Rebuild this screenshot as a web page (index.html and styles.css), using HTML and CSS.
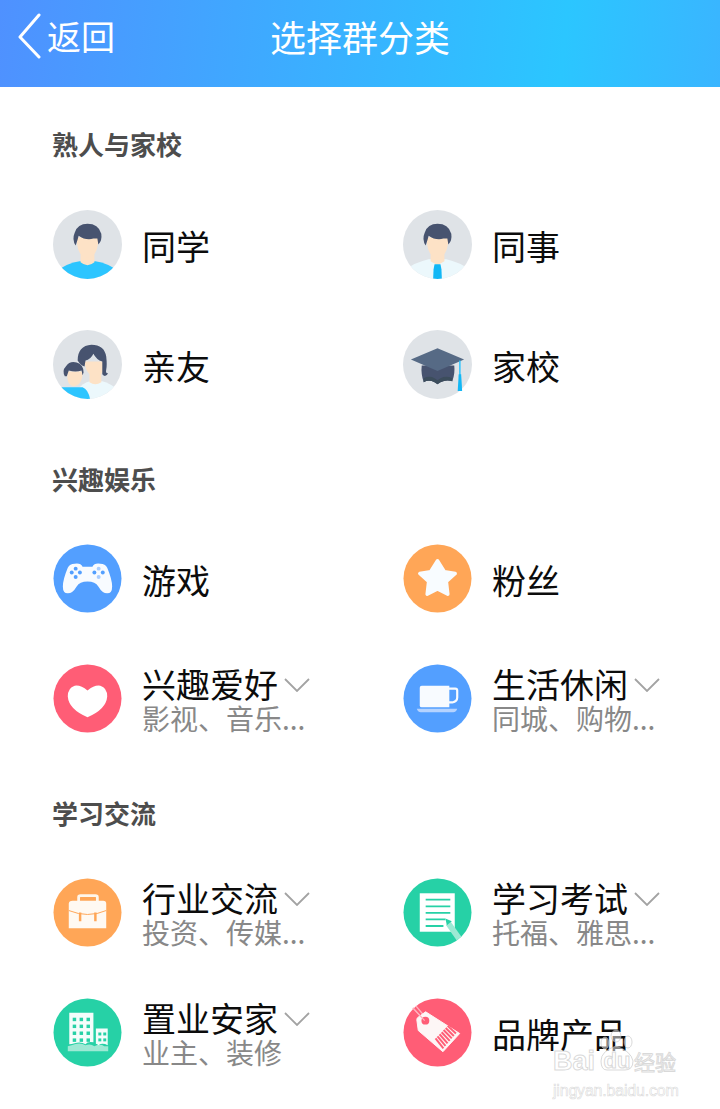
FILE: index.html
```html
<!DOCTYPE html>
<html lang="zh-CN">
<head>
<meta charset="utf-8">
<title>选择群分类</title>
<link rel="stylesheet" href="styles.css">
</head>
<body>
<div class="page">
  <header class="topbar">
    <div class="back">
      <svg class="back-arrow" width="28" height="46" viewBox="0 0 28 46"><path d="M24 2 L5 24 L24 44" fill="none" stroke="#fff" stroke-width="3" stroke-linecap="round" stroke-linejoin="round"/></svg>
      <span>返回</span>
    </div>
    <h1 class="title">选择群分类</h1>
  </header>
  <main class="content">
    <section class="group">
      <h2 class="group-title">熟人与家校</h2>
      <div class="grid">
        <div class="item">
          <svg class="icon" viewBox="0 0 70 70"><defs><clipPath id="c1"><circle cx="35" cy="35" r="35"/></clipPath></defs><circle cx="35" cy="35" r="35" fill="#dfe3e7"/><g clip-path="url(#c1)"><path d="M4 62 Q14 54 27 52 L43 52 Q56 54 66 62 L66 72 L4 72Z" fill="#2cc5ff"/><path d="M28 42 L42 42 L42 53 Q35 59 28 53Z" fill="#fde2c6"/><path d="M24 28 Q24 48 35 48 Q46 48 46 28Z" fill="#fde2c6"/><path d="M23 36 Q19 30 22 23 Q25 14 35 14 Q46 14 49 24 Q50 31 46 35 L45 29 L41 29 Q33 31 26 26 L25 30Z" fill="#47536f"/></g></svg>
          <div class="label"><div class="name">同学</div></div>
        </div>
        <div class="item">
          <svg class="icon" viewBox="0 0 70 70"><defs><clipPath id="c2"><circle cx="35" cy="35" r="35"/></clipPath></defs><circle cx="35" cy="35" r="35" fill="#dfe3e7"/><g clip-path="url(#c2)"><path d="M4 60 Q10 54 26 50 L44 50 Q60 54 66 60 L66 72 L4 72Z" fill="#ecf8fc"/><path d="M28 42 L42 42 L42 52 L35 56 L28 52Z" fill="#fde2c6"/><path d="M24 28 Q24 48 35 48 Q46 48 46 28Z" fill="#fde2c6"/><path d="M23 36 Q19 30 22 23 Q25 14 35 14 Q46 14 49 24 Q50 31 46 35 L45 29 L41 29 Q33 31 26 26 L25 30Z" fill="#47536f"/><path d="M32 55 L38 55 L39 60 L39.500 72 L30.500 72 L31 60Z" fill="#12b7f5"/></g></svg>
          <div class="label"><div class="name">同事</div></div>
        </div>
        <div class="item">
          <svg class="icon" viewBox="0 0 70 70"><defs><clipPath id="c3"><circle cx="35" cy="35" r="35"/></clipPath></defs><circle cx="35" cy="35" r="35" fill="#dfe3e7"/><g clip-path="url(#c3)"><path d="M24 62 Q30 53 38 52 L50 52 Q58 54 68 62 L68 72 L24 72Z" fill="#ecf8fc"/><path d="M37 42 L49 42 L49 53 Q43 57 37 53Z" fill="#fde2c6"/><path d="M32 32 Q33 46 43 47 Q53 46 53 32Z" fill="#fde2c6"/><path d="M25 31 Q25 16 39 15 Q52 15 54 27 Q55 36 54 40 Q53 44 56 44 Q53 49 50 45 Q50 38 50 32 Q44 30 41 24 Q38 30 33 31 L32 37 Q28 36 25 31Z" fill="#47536f"/><path d="M6 58 L30 58 Q36 60 38 72 L2 72Z" fill="#2cc5ff"/><path d="M15 42 Q13 56 21 57 Q30 56 30 42Z" fill="#fde2c6"/><path d="M12 47 Q9 41 13 37 Q17 31 24 33 Q31 35 31 43 L30 46 L29 41 Q23 43 16 41 L14 47Z" fill="#47536f"/></g></svg>
          <div class="label"><div class="name">亲友</div></div>
        </div>
        <div class="item">
          <svg class="icon" viewBox="0 0 70 70"><circle cx="35" cy="35" r="35" fill="#dfe3e7"/><path d="M19 36 L52 36 Q53 44 50 52 Q44 50 38 53 L35 55 L32 53 Q26 50 21 53 Q18 44 19 36Z" fill="#47536f"/><path d="M21 49 Q27 46 32 49 L35 51 L38 49 Q44 46 50 49 L50 52 Q44 50 38 53 L35 55 L32 53 Q26 50 21 53Z" fill="#3c4d5c"/><path d="M35 18.500 L62 30 L35 41.500 L8 30Z" fill="#566a85"/><path d="M57.700 31 L57.700 46" stroke="#2cc5ff" stroke-width="1.500"/><path d="M56.500 45 L59 45 L60 62 L55.500 62Z" fill="#12b7f5"/></svg>
          <div class="label"><div class="name">家校</div></div>
        </div>
      </div>
    </section>
    <section class="group">
      <h2 class="group-title">兴趣娱乐</h2>
      <div class="grid">
        <div class="item">
          <svg class="icon" viewBox="0 0 70 70"><circle cx="35" cy="35" r="34.500" fill="#539fff"/><path d="M22 20 Q17 20 15 24 Q10 36 10 43 Q10 50 15 50 Q20 50 24 43 Q27 38 35 38 Q43 38 46 43 Q50 50 55 50 Q60 50 60 43 Q60 36 55 24 Q53 20 48 20 Q42 19 40 23 L30 23 Q28 19 22 20Z" fill="#f8fbff"/><g fill="#539fff"><circle cx="19" cy="29" r="2"/><circle cx="23" cy="25" r="2"/><circle cx="27.300" cy="29" r="2"/><circle cx="23" cy="33.500" r="2"/><circle cx="42" cy="29" r="2"/><circle cx="50.500" cy="29" r="2"/></g><g fill="#a9cdff"><circle cx="46.300" cy="25" r="2"/><circle cx="46.300" cy="33.500" r="2"/></g></svg>
          <div class="label"><div class="name">游戏</div></div>
        </div>
        <div class="item">
          <svg class="icon" viewBox="0 0 70 70"><circle cx="35" cy="35" r="34.500" fill="#ffa657"/><path d="M35 17 L42 28 L53 30 L44 38 L45.500 51 L35 45.500 L24.500 51 L26 38 L17 30 L28 28Z" fill="#f8fcff" stroke="#f8fcff" stroke-width="3.500" stroke-linejoin="round"/></svg>
          <div class="label"><div class="name">粉丝</div></div>
        </div>
        <div class="item">
          <svg class="icon" viewBox="0 0 70 70"><circle cx="35" cy="35" r="34.500" fill="#ff5d76"/><path d="M35 27 Q28 21 22 22 Q15 24 15 33 Q16 46 35 54 Q54 46 55 33 Q55 24 48 22 Q42 21 35 27Z" fill="#fff"/></svg>
          <div class="label"><div class="name-row"><span class="name">兴趣爱好</span><svg class="chev" width="26" height="14" viewBox="0 0 26 14"><path d="M1 1 L13 13 L25 1" fill="none" stroke="#a3a3a3" stroke-width="1.800"/></svg></div><div class="sub">影视、音乐...</div></div>
        </div>
        <div class="item">
          <svg class="icon" viewBox="0 0 70 70"><circle cx="35" cy="35" r="34.500" fill="#539fff"/><path d="M19 22 L47 22 L47 44 L19 44 Q17 44 17 42 L17 24 Q17 22 19 22Z" fill="#f8fbff"/><path d="M46 25 L53 25 Q55 25 55 27 L55 34 Q55 38 50 39 L46 39" fill="none" stroke="#f8fbff" stroke-width="2.200"/><path d="M14 45.500 L55 45.500 Q54 49 51 49 L18 49 Q15 49 14 45.500Z" fill="#b5d3ff"/></svg>
          <div class="label"><div class="name-row"><span class="name">生活休闲</span><svg class="chev" width="26" height="14" viewBox="0 0 26 14"><path d="M1 1 L13 13 L25 1" fill="none" stroke="#a3a3a3" stroke-width="1.800"/></svg></div><div class="sub">同城、购物...</div></div>
        </div>
      </div>
    </section>
    <section class="group">
      <h2 class="group-title">学习交流</h2>
      <div class="grid">
        <div class="item">
          <svg class="icon" viewBox="0 0 70 70"><circle cx="35" cy="35" r="34.500" fill="#ffa657"/><path d="M26 24 L26 19.500 Q26 18 28 18 L43 18 Q45 18 45 19.500 L45 24" fill="none" stroke="#fff6ea" stroke-width="2.800"/><path d="M20 23 L51 23 Q54 23 54 26 L54 51 L16 51 L16 26 Q16 23 20 23Z" fill="#fff9f2"/><path d="M16 33 Q26 37 35 37 Q45 37 54 33" fill="none" stroke="#ffa657" stroke-width="1"/><path d="M27.500 35 L27.500 44 M43 35 L43 44" stroke="#ffa657" stroke-width="2.500"/></svg>
          <div class="label"><div class="name-row"><span class="name">行业交流</span><svg class="chev" width="26" height="14" viewBox="0 0 26 14"><path d="M1 1 L13 13 L25 1" fill="none" stroke="#a3a3a3" stroke-width="1.800"/></svg></div><div class="sub">投资、传媒...</div></div>
        </div>
        <div class="item">
          <svg class="icon" viewBox="0 0 70 70"><defs><clipPath id="c4"><circle cx="35" cy="35" r="34.500"/></clipPath></defs><circle cx="35" cy="35" r="34.500" fill="#26d1a6"/><rect x="17" y="15.500" width="35.500" height="39" fill="#fff"/><path d="M23 22 H48 M23 28.700 H48 M23 35.300 H48 M23 42 H43 M23 48.700 H41" stroke="#26d1a6" stroke-width="1.800"/><g clip-path="url(#c4)"><path d="M46 46 L60 66" stroke="#9de9d4" stroke-width="6"/><path d="M43 41 L49.500 44 L44.500 48Z" fill="#26d1a6"/></g></svg>
          <div class="label"><div class="name-row"><span class="name">学习考试</span><svg class="chev" width="26" height="14" viewBox="0 0 26 14"><path d="M1 1 L13 13 L25 1" fill="none" stroke="#a3a3a3" stroke-width="1.800"/></svg></div><div class="sub">托福、雅思...</div></div>
        </div>
        <div class="item">
          <svg class="icon" viewBox="0 0 70 70"><circle cx="35" cy="35" r="34.500" fill="#26d1a6"/><path d="M15 54 L15 49 Q19 48 22 47 Q28 45 33 48 Q38 46 42 49 Q48 46 52 49 L56 49 L56 54Z" fill="#9de9d4"/><path d="M16.500 15 L41 15 L41 45 Q35 44 33 47 Q28 44 22 46 Q19 47 16.500 47Z" fill="#f4fdfb"/><path d="M43.500 31 L55.500 31 L55.500 48 Q50 45 46 48 Q45 47 43.500 46.500Z" fill="#f4fdfb"/><g fill="#26d1a6"><rect x="20" y="20" width="3.500" height="3.500"/><rect x="27" y="20" width="3.500" height="3.500"/><rect x="34" y="20" width="3.500" height="3.500"/><rect x="20" y="27" width="3.500" height="3.500"/><rect x="27" y="27" width="3.500" height="3.500"/><rect x="34" y="27" width="3.500" height="3.500"/><rect x="20" y="34" width="3.500" height="3.500"/><rect x="27" y="34" width="3.500" height="3.500"/><rect x="34" y="34" width="3.500" height="3.500"/><rect x="20" y="41" width="3.500" height="3.500"/><rect x="27" y="41" width="3.500" height="3.500"/><rect x="34" y="41" width="3.500" height="3.500"/><rect x="46" y="35" width="3" height="3"/><rect x="51" y="35" width="3" height="3"/><rect x="46" y="41" width="3" height="3"/><rect x="51" y="41" width="3" height="3"/></g></svg>
          <div class="label"><div class="name-row"><span class="name">置业安家</span><svg class="chev" width="26" height="14" viewBox="0 0 26 14"><path d="M1 1 L13 13 L25 1" fill="none" stroke="#a3a3a3" stroke-width="1.800"/></svg></div><div class="sub">业主、装修</div></div>
        </div>
        <div class="item">
          <svg class="icon" viewBox="0 0 70 70"><circle cx="35" cy="35" r="34.500" fill="#ff5d76"/><path d="M10 10 L22 23 M13 8 L24 21" stroke="#ffb0bc" stroke-width="1.400"/><path d="M23 14 L57.500 36 L40.500 54.500 L15.500 33 L14 22 Q14 20 16 19Z" fill="#fdf6f6" stroke="#fdf6f6" stroke-linejoin="round"/><circle cx="22.700" cy="23" r="4" fill="#ff5d76"/><path d="M10 10 L22 23" stroke="#ffb0bc" stroke-width="1.200"/><g stroke="#ff5d76" stroke-width="2"><path d="M33 41 L41 51"/><path d="M35 38.900 L43.100 48.500"/><path d="M37.100 36.800 L45.200 46"/><path d="M39.200 34.700 L47.400 43.500"/><path d="M41.200 32.500 L49.500 41"/><path d="M43.300 30.400 L51.600 38.500"/><path d="M45.300 28.300 L53.700 36"/></g></svg>
          <div class="label"><div class="name">品牌产品</div></div>
        </div>
      </div>
    </section>
  </main>
  <div class="watermark">
    <div class="wm-logo"><span>Bai</span><span class="wm-paw"><svg class="wm-paw-art" width="40" height="44" viewBox="0 0 40 44"><g fill="rgba(255,255,255,.5)" stroke="rgba(185,185,185,.55)" stroke-width="1"><ellipse cx="8" cy="14" rx="4" ry="6"/><ellipse cx="19" cy="7" rx="5" ry="6"/><ellipse cx="31" cy="13" rx="4" ry="6"/><path d="M4 32 Q4 22 19 17 Q34 22 36 32 Q36 41 28 41 L10 41 Q4 41 4 32Z"/></g></svg><span class="wm-du">du</span></span><span class="wm-cn">经验</span></div>
    <div class="wm-url">jingyan.baidu.com</div>
  </div>
</div>
</body>
</html>
```
FILE: styles.css
```css
* { box-sizing: border-box; margin: 0; padding: 0; }
html, body { width: 720px; height: 1109px; overflow: hidden; background: #fff; }
body { font-family: "Noto Sans CJK SC", "Noto Sans", sans-serif; }
.page { position: relative; width: 720px; height: 1109px; overflow: hidden; }
.topbar {
  position: relative;
  height: 87px;
  background: linear-gradient(96deg, #4f91ff 0%, #2bc6ff 78%, #3ab5ff 100%);
  color: #fff;
  display: flex;
  align-items: center;
  justify-content: center;
}
.back {
  position: absolute;
  left: 15px;
  top: 13px;
  display: flex;
  align-items: center;
  font-size: 34px;
  line-height: 46px;
}
.back-arrow { margin-right: 4px; }
.title { font-size: 36px; font-weight: 400; line-height: 46px; margin-top: -15px; }
.content { padding: 4px 0 0 53px; }
.group { height: 334px; }
.group-title {
  height: 94px;
  padding-top: 34px;
  margin-left: -1px;
  font-size: 26px;
  line-height: 38px;
  font-weight: 700;
  color: #4d4d4d;
}
.group + .group .group-title { padding-top: 35px; }
.grid { display: grid; grid-template-columns: 350px 317px; grid-auto-rows: 120px; }
.item { display: flex; align-items: center; }
.icon { width: 69px; height: 69px; flex: none; margin: -1px 20px 0 0; }
.label { display: flex; flex-direction: column; padding-top: 3px; }
.label > .name { margin-top: -2px; }
.name { font-size: 34px; line-height: 36px; color: #0c0c0c; }
.name-row { display: flex; align-items: center; }
.chev { margin-left: 6px; margin-top: 1px; }
.sub { font-size: 28px; line-height: 34px; color: #888; margin-top: -1px; }
.watermark {
  position: absolute;
  left: 553px;
  top: 1045px;
  font-family: "Liberation Sans", sans-serif;
  color: rgba(255, 255, 255, 0.55);
  -webkit-text-stroke: 1px rgba(185, 185, 185, 0.55);
}
.wm-logo { display: flex; align-items: center; font-size: 27px; line-height: 32px; font-weight: 700; white-space: nowrap; }
.wm-paw { position: relative; width: 40px; margin-left: 2px; text-align: center; font-size: 22px; }
.wm-paw-art { position: absolute; left: 0; top: -16px; }
.wm-du { position: relative; }
.wm-cn { font-family: "Noto Sans CJK SC", sans-serif; font-size: 21px; font-weight: 400; margin-left: -3px; }
.wm-url { font-size: 16px; line-height: 20px; margin-top: 4px; -webkit-text-stroke-width: 0.6px; letter-spacing: -0.2px; }
```
